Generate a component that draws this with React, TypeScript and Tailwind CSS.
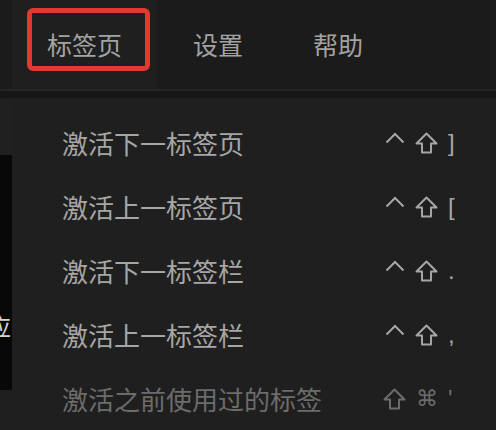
import { Fragment } from 'react';

type Key = 'ctrl' | 'shift' | 'cmd' | string;

interface MenuItem {
  label: string;
  keys: Key[];
  disabled?: boolean;
}

const MENU: MenuItem[] = [
  { label: '激活下一标签页', keys: ['ctrl', 'shift', ']'] },
  { label: '激活上一标签页', keys: ['ctrl', 'shift', '['] },
  { label: '激活下一标签栏', keys: ['ctrl', 'shift', '.'] },
  { label: '激活上一标签栏', keys: ['ctrl', 'shift', ','] },
  { label: '激活之前使用过的标签', keys: ['shift', 'cmd', "'"], disabled: true }
];

const CJK = "font-['Noto_Sans_CJK_SC','Noto_Sans',sans-serif]";

function CaretIcon() {
  return (
    <svg width="20" height="12" viewBox="0 0 20 12" fill="none" className="mb-[10px]">
      <polyline points="1.5,10.5 10,2 18.5,10.5" stroke="currentColor" strokeWidth="2" />
    </svg>
  );
}

function ShiftIcon() {
  return (
    <svg width="23" height="22" viewBox="0 0 23 22" fill="none">
      <path d="M11.5 1.5 L21.5 11.5 H16 V20.5 H7 V11.5 H1.5 Z" stroke="currentColor" strokeWidth="2" strokeLinejoin="round" />
    </svg>
  );
}

function KeyGlyph({ k }: { k: Key }) {
  if (k === 'ctrl') return <CaretIcon />;
  if (k === 'shift') return <ShiftIcon />;
  if (k === 'cmd') return <span className="font-['DejaVu_Sans',sans-serif] text-[22px] leading-none">⌘</span>;
  return <span className="w-[8px] font-['Liberation_Sans',sans-serif] text-[24px] leading-none">{k}</span>;
}

export default function App() {
  return (
    <div className={`h-[430px] w-[496px] overflow-hidden bg-[#1f1f1f] ${CJK}`}>
      <header className="flex h-[89px] items-center bg-[#1b1b1b] pl-[12px]">
        <div className="relative flex h-full items-center bg-[#1f1f1f] px-[35px]">
          <span className="text-[25px] text-[#a3a3a3]">标签页</span>
          <div className="absolute left-[15px] top-[8px] h-[63px] w-[123px] rounded-[6px] border-[length:5px] border-[#e23a30]" />
        </div>
        <div className="px-[36px] text-[25px] text-[#a3a3a3]">设置</div>
        <div className="px-[34px] text-[25px] text-[#a3a3a3]">帮助</div>
      </header>
      <div className="h-[2px] bg-[#262626]" />
      <div className="h-[7px] bg-[#161616]" />

      <div className="flex">
        <div className="w-[12px] shrink-0">
          <div className="h-[57px] bg-[#202020]" />
          <div className="h-[235px] overflow-hidden bg-[#080808] pt-[159px]">
            <span className="-ml-[13px] block text-[24px] leading-none text-[#d4d4d4]">应</span>
          </div>
        </div>
        <div className="flex-1 bg-[#1f1f1f] pt-[13px]">
          {MENU.map((item) => (
            <div
              key={item.label}
              className={`flex h-[64px] items-center justify-between pl-[50px] pr-[40px] ${
                item.disabled ? 'text-[#6c6c6c]' : 'text-[#a6a6a6]'
              }`}
            >
              <span className="text-[26px] leading-none">{item.label}</span>
              <div className="flex items-center gap-[10px]">
                {item.keys.map((k, i) => (
                  <Fragment key={i}>
                    <KeyGlyph k={k} />
                  </Fragment>
                ))}
              </div>
            </div>
          ))}
        </div>
      </div>
    </div>
  );
}
